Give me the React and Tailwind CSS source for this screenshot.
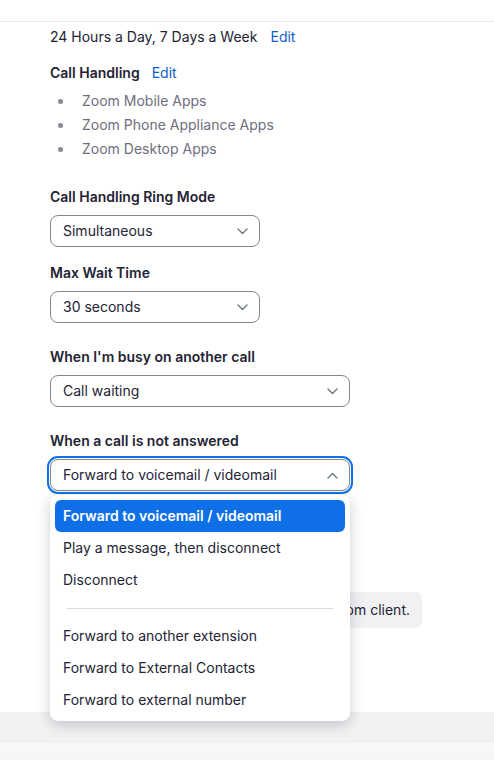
import React from "react";

function Chevron({ up }) {
  return (
    <svg width="11" height="7" viewBox="0 0 11 7" fill="none">
      <path
        d={up ? "M1 6l4.5-4.5L10 6" : "M1 1l4.5 4.5L10 1"}
        stroke="#6e7680"
        strokeWidth="1.4"
        strokeLinecap="round"
        strokeLinejoin="round"
      />
    </svg>
  );
}

function Select({ value, width, up }) {
  return (
    <div
      className={`flex h-8 items-center justify-between rounded-lg border border-[#86868f] bg-white pl-3 pr-[11px] text-sm text-[#232333] ${width}`}
    >
      <span>{value}</span>
      <Chevron up={up} />
    </div>
  );
}

function Label({ children, className }) {
  return (
    <div className={`text-sm font-semibold leading-5 text-[#232333] ${className}`}>
      {children}
    </div>
  );
}

const options = [
  "Play a message, then disconnect",
  "Disconnect",
];

const forwardOptions = [
  "Forward to another extension",
  "Forward to External Contacts",
  "Forward to external number",
];

function App() {
  return (
    <div
      className="h-[760px] overflow-hidden bg-white"
      style={{ fontFamily: "Inter, 'Liberation Sans', sans-serif" }}
    >
      <div className="h-[22px] border-b border-[#ececee]" />
      <div className="px-[50px] pt-[5px]">
        <div className="flex items-center text-sm leading-5 text-[#232333]">
          <span>24 Hours a Day, 7 Days a Week</span>
          <span className="ml-[13px] text-[#0e5ec9]">Edit</span>
        </div>

        <div className="mt-4 flex items-center">
          <Label>Call Handling</Label>
          <span className="ml-3 text-sm leading-5 text-[#0e5ec9]">Edit</span>
        </div>
        <ul className="mt-[6px]">
          {["Zoom Mobile Apps", "Zoom Phone Appliance Apps", "Zoom Desktop Apps"].map((item) => (
            <li key={item} className="flex h-6 items-center text-sm text-[#6e6e7e]">
              <span className="ml-2 h-[5px] w-[5px] rounded-full bg-[#8a8a96]" />
              <span className="ml-[19px]">{item}</span>
            </li>
          ))}
        </ul>

        <Label className="mt-[26px]">Call Handling Ring Mode</Label>
        <div className="mt-2">
          <Select value="Simultaneous" width="w-[210px]" />
        </div>

        <Label className="mt-4">Max Wait Time</Label>
        <div className="mt-2">
          <Select value="30 seconds" width="w-[210px]" />
        </div>

        <Label className="mt-6">When I'm busy on another call</Label>
        <div className="mt-2">
          <Select value="Call waiting" width="w-[300px]" />
        </div>

        <Label className="mt-6">When a call is not answered</Label>
        <div className="relative mt-2 w-[300px]">
          <div className="rounded-lg outline-[2.5px] outline-offset-[1px] outline-[#0e72ed]">
            <Select value="Forward to voicemail / videomail" width="w-[300px]" up />
          </div>

          <div className="absolute left-0 top-[36px] z-10 w-[300px] rounded-lg bg-white p-[5px] shadow-[0_4px_14px_rgba(35,35,51,0.22)]">
            <div className="flex h-8 items-center rounded-md bg-[#0e6fe6] pl-2 text-sm font-semibold text-white">
              Forward to voicemail / videomail
            </div>
            {options.map((o) => (
              <div key={o} className="flex h-8 items-center pl-2 text-sm text-[#232333]">
                {o}
              </div>
            ))}
            <div className="flex h-6 items-center px-3">
              <div className="h-px w-full bg-[#dcdce0]" />
            </div>
            {forwardOptions.map((o) => (
              <div key={o} className="flex h-8 items-center pl-2 text-sm text-[#232333]">
                {o}
              </div>
            ))}
          </div>
        </div>

        <div className="mt-[101px] inline-flex h-9 items-center whitespace-nowrap rounded-md bg-[#f1f1f4] px-3 text-sm text-[#232333]">
          You can now change the greeting in the Zoom client.
        </div>
      </div>

      <div className="mt-[84px] h-[31px] bg-[#f2f2f4]" />
      <div className="h-[30px] bg-gradient-to-b from-[#f8f8f8] to-[#f5f5f5]" />
    </div>
  );
}

export default App;
